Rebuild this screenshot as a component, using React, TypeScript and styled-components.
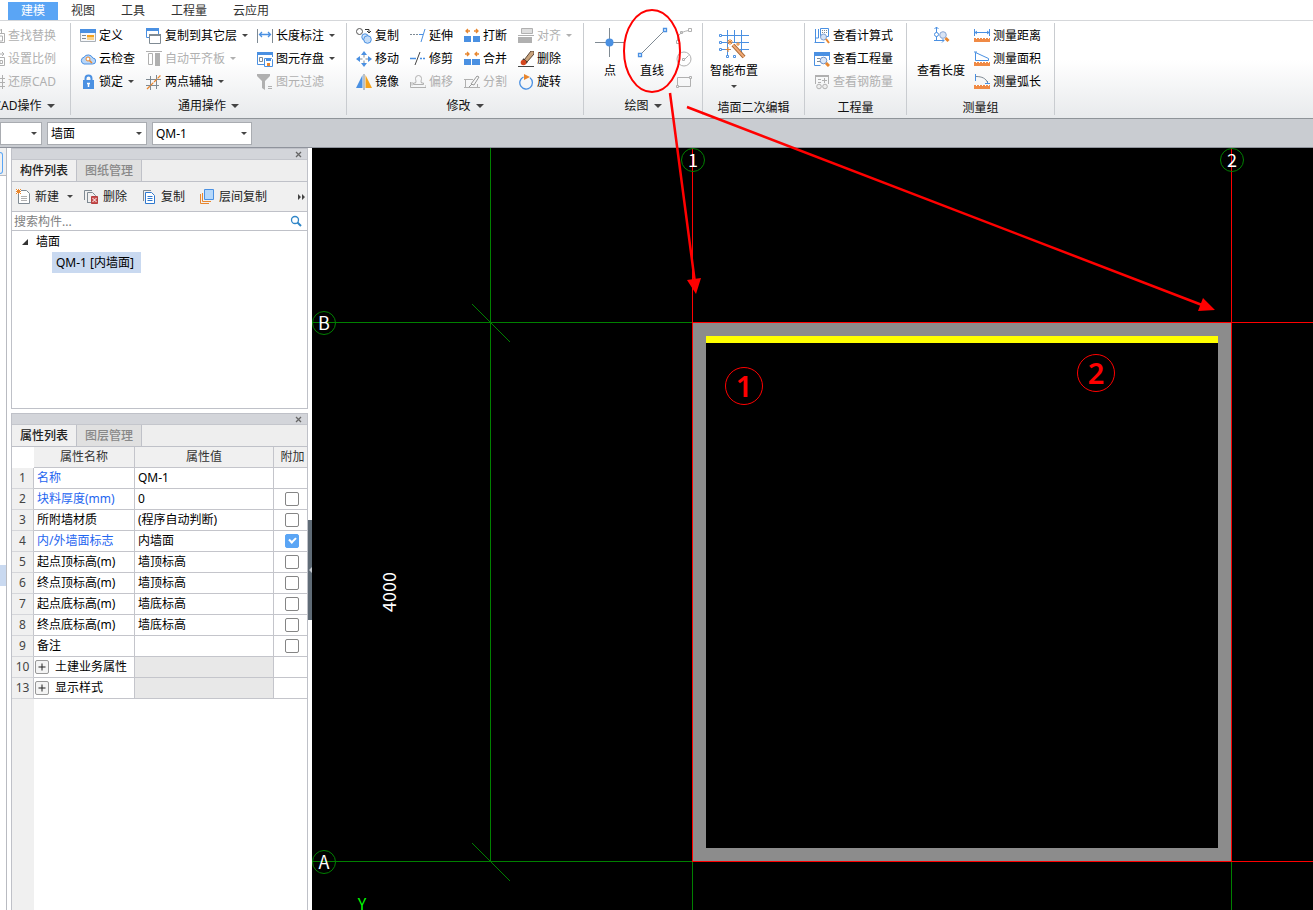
import React from "react";
import styled, { createGlobalStyle, css } from "styled-components";

const UI_FONT = '"Noto Sans", "Noto Sans CJK SC", sans-serif';

const GlobalStyle = createGlobalStyle`
  *, *::before, *::after { box-sizing: border-box; }
  html, body { margin: 0; padding: 0; }
  body { font: 12px/16px ${UI_FONT}; color: #1a1a1a; background: #fff; overflow: hidden; }
  button, input, select { font: inherit; color: inherit; margin: 0; }
  button { background: none; border: 0; padding: 0; cursor: pointer; }
`;

/* ---------- icons ---------- */

const B = "#4a90e2";
const G = "#7f8a93";
const O = "#e8862e";
const D = "#b0b0b0";

const icons: Record<string, React.ReactNode> = {
  find: <path d="M2 5.500h13.500v9H2zM5 2h8M12.500 1v4M10.500 8h3v5h-3z" fill="none" stroke={D} />,
  scale: <path d="M2 6.500h13.500v8H2zM9 3h6M13 1l2 2-2 2M11 9.500h2.500v3H11z" fill="none" stroke={D} />,
  restore: <path d="M13.500 1v14M11 4.500h5M11 8.500h5M11 12.500h5" fill="none" stroke={D} />,
  define: (
    <>
      <path d="M.5 4v9.500h15V4" fill="#f7f8fa" stroke="#a8afb6" />
      <path d="M0 1h16v4H0z" fill={B} />
      <path d="M2 7.500h4M2 10.500h4" stroke={G} />
      <path d="M7 7h7v2H7z" fill="#f5a21b" />
      <path d="M7 9h7v3H7z" fill="#fbd38a" />
    </>
  ),
  cloud: (
    <>
      <path d="M4 13h8.500a3 3 0 0 0 .3-6A5 5 0 0 0 4 6.200 3.500 3.500 0 0 0 4 13z" fill="#b9d6f7" stroke={B} />
      <circle cx="8" cy="8" r="2" fill="#fff" stroke={O} />
      <path d="M9.500 9.500L12 12" stroke={O} strokeWidth="1.500" />
    </>
  ),
  lock: (
    <>
      <path d="M5.500 7V4.500a3 3 0 0 1 6 0V7" fill="none" stroke={B} strokeWidth="2" />
      <path d="M3 6h11v9H3z" fill={B} />
      <path d="M8.500 9v4M7 9.500h3" stroke="#fff" strokeWidth="1.500" />
    </>
  ),
  copyLayer: (
    <>
      <path d="M.5 1.500h12v8H.5z" fill="#fff" stroke={B} />
      <path d="M0 0h13v3H0z" fill={B} />
      <path d="M3.500 6.500h11v9h-11z" fill="#fff" stroke={G} />
      <path d="M3 6h12v2H3z" fill={G} />
    </>
  ),
  align2: (
    <>
      <path d="M0 .5h16" stroke={D} />
      <path d="M2.500 2.500h4v11h-4z" fill="none" stroke={D} />
      <path d="M9 2h5v13H9z" fill={D} />
    </>
  ),
  axis: (
    <>
      <path d="M0 5.500h15M0 11.500h13M4.500 2v14M10.500 1v14" stroke={G} />
      <path d="M1 15L15 1" stroke={O} strokeWidth="1.300" strokeDasharray="4 1" />
    </>
  ),
  dim: (
    <>
      <path d="M.5 1v14M15.500 1v14" stroke={G} />
      <path d="M3 6.500h10M5 4L2.500 6.500 5 9M11 4l2.500 2.500L11 9" fill="none" stroke={B} strokeWidth="1.300" />
    </>
  ),
  save: (
    <>
      <path d="M.5 3v10.500h7M15.500 3v3" fill="none" stroke={B} />
      <path d="M0 1h16v3H0z" fill={B} />
      <path d="M2.500 6.500h3v4h-3z" fill="none" stroke={G} />
      <path d="M7.500 7.500h7l1 1v7h-8z" fill="#fff" stroke={B} />
      <path d="M9 8h5v2H9z" fill={B} />
      <path d="M10 12h3v3h-3z" fill={O} />
    </>
  ),
  filter: <path d="M0 0h13v2L8 7v9l-3-2V7L0 2zM11 12h4v1h-4zM11 14h4v1h-4z" fill={D} />,
  copy: (
    <>
      <circle cx="3.500" cy="3.500" r="3" fill="#fff" stroke="#555" />
      <path d="M9 1.500h4v3M11 3l2 2 2-2" fill="none" stroke="#333" />
      <circle cx="9" cy="9" r="3.200" fill="#d4e6fa" stroke={B} />
      <circle cx="11.500" cy="11.500" r="3.800" fill="#c4dcf7" stroke={B} />
    </>
  ),
  move: (
    <>
      <path d="M8 0l3 4H5zM8 16l3-4H5zM0 8l4-3v6zM16 8l-4-3v6z" fill={B} />
      <path d="M8 4v2.500M8 9.500V12M4 8h2.500M9.500 8H12" stroke={G} />
    </>
  ),
  mirror: (
    <>
      <path d="M6.500 1v13H0z" fill={B} />
      <path d="M8 0v16" stroke={G} />
      <path d="M9.500 1v13H16z" fill="#f5a21b" />
    </>
  ),
  extend: (
    <>
      <path d="M0 6.500h8" stroke={G} strokeDasharray="2 1" />
      <path d="M15 1l-4 13" stroke={B} />
      <path d="M9 6.500h4" stroke={B} />
    </>
  ),
  trim: (
    <>
      <path d="M0 7.500h6" stroke={B} strokeWidth="1.500" />
      <path d="M10 7.500h6" stroke={B} strokeWidth="1.500" strokeDasharray="2 1" />
      <path d="M10 1L5 14" stroke="#444" />
    </>
  ),
  offset: (
    <>
      <path d="M3.500 10.500h10V9h-2c-1-2 0-2.500 0-4.500a3 3 0 0 0-6 0c0 2 1 2.500 0 4.500h-2z" fill="none" stroke={D} />
      <path d="M.5 8v5.500H16V11M2 8v3.500" fill="none" stroke={D} />
    </>
  ),
  breakUp: (
    <>
      <path d="M0 8h7v6H0zM9 8h7v6H9z" fill={B} />
      <path d="M6 3H2M4 1L2 3l2 2M10 3h4M12 1l2 2-2 2" fill="none" stroke={O} strokeWidth="1.300" />
    </>
  ),
  merge: (
    <>
      <path d="M0 8h7v6H0zM8 8h8v6H8z" fill={B} />
      <path d="M1 3h4M3 1l2 2-2 2M15 3h-4M13 1l-2 2 2 2" fill="none" stroke={O} strokeWidth="1.300" />
    </>
  ),
  split: (
    <>
      <path d="M1.500 5v8.500h12V10M0 5.500h9M0 13.500h16" fill="none" stroke={D} />
      <path d="M7 10l6-8 2 1-5 8zM5 13l3-3" fill="none" stroke="#999" />
    </>
  ),
  alignTo: (
    <>
      <path d="M3.500.5h11v5h-11z" fill="#ddd" stroke={D} />
      <path d="M0 7.500h16" stroke={D} />
      <path d="M0 9h14v6H0z" fill={D} />
    </>
  ),
  erase: (
    <>
      <path d="M6.500 8.500L13 0h3v3l-7 8z" fill="#c9a37c" stroke="#5c4634" />
      <path d="M5 8l4 4" stroke="#333" strokeWidth="2" />
      <circle cx="5.500" cy="11.500" r="2.800" fill="#d3461f" />
      <path d="M0 15.500h16" stroke="#444" />
    </>
  ),
  rotate: (
    <>
      <path d="M5.500 3A6.300 6.300 0 1 0 12 3.800" fill="none" stroke={B} strokeWidth="1.300" />
      <path d="M6 0l6 3-6 3z" fill={O} />
    </>
  ),
  arc: <path d="M1.500 12c0-5 3-8 11-9.500M.5 12.500h3v3h-3zM12.500.5h3v3h-3zM4.500 3.500h2v2h-2z" fill="none" stroke={D} />,
  circle: (
    <>
      <circle cx="8" cy="8" r="7" fill="none" stroke={D} />
      <path d="M8.500 8.500l4-4M6.500 7.500h2v2h-2z" fill="none" stroke={D} />
    </>
  ),
  rect: (
    <>
      <path d="M1.500 3.500h13v9h-13z" fill="none" stroke={D} />
      <path d="M.5 11.500h2v2h-2zM13.500 2.500h2v2h-2z" fill="#f5f6f6" stroke={D} />
    </>
  ),
  formula: (
    <>
      <path d="M1.500 1v13.500H8M4.500 1v9H1.500M.5 14.500h10" fill="none" stroke={B} />
      <path d="M6.500.5h8v8h-8z" fill="#fff" stroke={B} />
      <path d="M8 2.500h5M8 4.500h5" stroke={G} strokeDasharray="1 1" />
      <circle cx="9.500" cy="9" r="3" fill="#d4e2f5" stroke="#7c9dd0" />
      <path d="M12 11l3 4" stroke={O} strokeWidth="2" />
    </>
  ),
  quantity: (
    <>
      <path d="M.5 3v11.500h6M15.500 3v6" fill="none" stroke={B} />
      <path d="M0 1h16v4H0z" fill={B} />
      <path d="M3 7.500h3M3 10.500h3" stroke={G} />
      <circle cx="9.500" cy="9.500" r="3.300" fill="#dce8f8" stroke="#6f92c8" />
      <path d="M12 12l3 3" stroke={O} strokeWidth="3" />
    </>
  ),
  rebar: (
    <>
      <path d="M1.500 10V2.500h13V10M4 5.500h3M4 8.500h3M10.500 4v5M8 6.500h5" fill="none" stroke={D} />
      <path d="M1 1h14v2H1z" fill={D} />
      <circle cx="5" cy="12.500" r="2.300" fill="#eee" stroke={D} />
      <circle cx="11" cy="12.500" r="2.300" fill="#eee" stroke={D} />
    </>
  ),
  viewLen: (
    <>
      <path d="M3.500 0v14M1.500 2l2-2 2 2M1 13.500h10M9 11.500l2 2-2 2" fill="none" stroke={B} />
      <circle cx="3.500" cy="7.500" r="2" fill="#fff" stroke={B} />
      <circle cx="10" cy="8" r="3.300" fill="#d9e4f5" stroke="#8aa6d3" />
      <path d="M12.500 11l3 3" stroke={O} strokeWidth="3" />
    </>
  ),
  dist: (
    <>
      <path d="M.5 1v7M15.500 1v7M1 4.500h14M3 3L1 4.500 3 6M13 3l2 1.500L13 6" fill="none" stroke={B} />
      <path d="M0 10h16v4H0z" fill="#f08a45" />
      <path d="M2 10.500h13" stroke="#fff" strokeDasharray="1 2" />
    </>
  ),
  area: (
    <>
      <path d="M1.500 1.500l13 6v2h-13zM0 1h3" fill="none" stroke={B} />
      <path d="M0 11h16v4H0z" fill="#f08a45" />
      <path d="M2 11.500h13" stroke="#fff" strokeDasharray="1 2" />
    </>
  ),
  arcLen: (
    <>
      <path d="M1.500 0v7M11 9.500h5M13.500 7v3" fill="none" stroke={B} />
      <path d="M2 2.500c6 0 10 2 11.500 6" fill="none" stroke={G} />
      <path d="M0 11h16v4H0z" fill="#f08a45" />
      <path d="M2 11.500h13" stroke="#fff" strokeDasharray="1 2" />
    </>
  ),
  newDoc: (
    <>
      <path d="M2.500 1.500h8l3 3v10h-11z" fill="#fff" stroke={G} />
      <path d="M5 7.500h6M5 9.500h6M5 11.500h6" stroke={D} />
      <path d="M0 0h5v5H0z" fill="#fff" />
      <path d="M0 0l5 5M5 0L0 5M2.500 0v5M0 2.500h5" stroke={O} />
    </>
  ),
  delDoc: (
    <>
      <path d="M.5 11V1.500H8M3.500 14V3.500h5l3 3V7M3.500 13.500H7" fill="none" stroke={G} />
      <path d="M7.500 7.500h6v7h-6z" fill="#c94f4f" stroke="#b54040" />
      <path d="M8.500 9l4 4M12.500 9l-4 4" stroke="#fff" />
    </>
  ),
  copyDoc: (
    <>
      <path d="M1.500 12V1.500H9" fill="none" stroke={G} />
      <path d="M3.500 3.500h6l3 3v8h-9z" fill="#fff" stroke="#2f79cf" />
      <path d="M5.500 7.500h5M5.500 9.500h5M5.500 11.500h5" stroke="#2f79cf" />
    </>
  ),
  layerCopy: (
    <>
      <path d="M.5 5v9.500H9" fill="none" stroke={O} />
      <path d="M2.500 4v8.500H11" fill="none" stroke={O} />
      <path d="M4.500.5h9v10h-9z" fill="#b5d8fb" stroke={B} />
    </>
  ),
};

const Glyph = styled.svg`
  flex: none;
  width: 16px;
  height: 16px;
`;

const Icon = ({ name }: { name: string }) => (
  <Glyph viewBox="0 0 16 16" aria-hidden="true">{icons[name]}</Glyph>
);

const CaretSvg = styled.svg<{ $muted?: boolean }>`
  flex: none;
  width: 6px;
  height: 3px;
  fill: ${(p) => (p.$muted ? "#b0b0b0" : "#444")};
`;

const Caret = ({ muted }: { muted?: boolean }) => (
  <CaretSvg viewBox="0 0 6 3" $muted={muted} aria-hidden="true"><path d="M0 0h6L3 3z" /></CaretSvg>
);

/* ---------- ribbon ---------- */

const Page = styled.div`
  position: relative;
  display: flex;
  flex-direction: column;
  height: 100vh;
  min-height: 500px;
`;

const MenuBar = styled.nav`
  flex: none;
  display: flex;
  height: 21px;
  padding: 2px 8px 0;
  border-bottom: 1px solid #d5d7da;
`;

const MenuTab = styled.button<{ $active?: boolean }>`
  padding: 0 13px;
  line-height: 18px;
  color: ${(p) => (p.$active ? "#fff" : "#333")};
  background: ${(p) => (p.$active ? "#5aa5f5" : "transparent")};
`;

const Ribbon = styled.div`
  flex: none;
  display: flex;
  height: 98px;
  padding: 2px 0 3px;
  overflow: hidden;
  background: linear-gradient(#fff 40%, #e8eaec);
  border-bottom: 1px solid #8f9499;
`;

const Group = styled.section<{ $width: number; $cut?: boolean }>`
  flex: none;
  display: flex;
  flex-direction: column;
  width: ${(p) => p.$width}px;
  margin-left: ${(p) => (p.$cut ? -22 : 0)}px;
  border-right: 1px solid #c9ccd0;
`;

const GroupBody = styled.div<{ $cols?: string; $pad?: number }>`
  flex: none;
  display: grid;
  grid-template-columns: ${(p) => p.$cols ?? "auto"};
  grid-template-rows: repeat(3, 23px);
  grid-auto-flow: column;
  justify-content: start;
  height: 72px;
  padding: 1px 0 0 ${(p) => p.$pad ?? 9}px;
`;

const GroupTitle = styled.div<{ $low?: boolean }>`
  flex: none;
  display: flex;
  align-items: center;
  justify-content: center;
  gap: 5px;
  height: 16px;
  margin-top: ${(p) => (p.$low ? 5 : 3)}px;
  white-space: nowrap;
  color: #111;
  ${CaretSvg} { width: 8px; height: 4px; }
`;

const ToolButton = styled.button`
  display: flex;
  align-items: center;
  gap: 3px;
  white-space: nowrap;
  text-align: left;
  color: #000;
  &:disabled { color: #b0b0b0; }
  ${CaretSvg} { margin-left: 2px; }
`;

const BigButton = styled.button`
  grid-row: 1 / span 3;
  display: flex;
  flex-direction: column;
  align-items: center;
  white-space: nowrap;
  color: #000;
  ${CaretSvg} { margin-top: 6px; }
`;

const BigArt = styled.svg`
  width: 32px;
  height: 32px;
  margin: 3px 0 4px;
`;

type ToolDef = { icon: string; label: string; off?: boolean; menu?: boolean };

const Tool = ({ icon, label, off, menu }: ToolDef) => (
  <ToolButton disabled={off}>
    <Icon name={icon} />
    {label}
    {menu && <Caret muted={off} />}
  </ToolButton>
);

const IconTool = ({ icon, label }: ToolDef) => (
  <ToolButton aria-label={label}><Icon name={icon} /></ToolButton>
);

const cadTools: ToolDef[] = [
  { icon: "find", label: "查找替换", off: true },
  { icon: "scale", label: "设置比例", off: true },
  { icon: "restore", label: "还原CAD", off: true },
];

const commonTools: ToolDef[] = [
  { icon: "define", label: "定义" },
  { icon: "cloud", label: "云检查" },
  { icon: "lock", label: "锁定", menu: true },
  { icon: "copyLayer", label: "复制到其它层", menu: true },
  { icon: "align2", label: "自动平齐板", off: true, menu: true },
  { icon: "axis", label: "两点辅轴", menu: true },
  { icon: "dim", label: "长度标注", menu: true },
  { icon: "save", label: "图元存盘", menu: true },
  { icon: "filter", label: "图元过滤", off: true },
];

const editTools: ToolDef[] = [
  { icon: "copy", label: "复制" },
  { icon: "move", label: "移动" },
  { icon: "mirror", label: "镜像" },
  { icon: "extend", label: "延伸" },
  { icon: "trim", label: "修剪" },
  { icon: "offset", label: "偏移", off: true },
  { icon: "breakUp", label: "打断" },
  { icon: "merge", label: "合并" },
  { icon: "split", label: "分割", off: true },
  { icon: "alignTo", label: "对齐", off: true, menu: true },
  { icon: "erase", label: "删除" },
  { icon: "rotate", label: "旋转" },
];

const quantityTools: ToolDef[] = [
  { icon: "formula", label: "查看计算式" },
  { icon: "quantity", label: "查看工程量" },
  { icon: "rebar", label: "查看钢筋量", off: true },
];

const measureTools: ToolDef[] = [
  { icon: "dist", label: "测量距离" },
  { icon: "area", label: "测量面积" },
  { icon: "arcLen", label: "测量弧长" },
];

const tools = (list: ToolDef[]) => list.map((t) => <Tool key={t.label} {...t} />);

const RibbonBar = () => (
  <Ribbon>
    <Group $width={93} $cut>
      <GroupBody $pad={11}>{tools(cadTools)}</GroupBody>
      <GroupTitle>CAD操作<Caret /></GroupTitle>
    </Group>
    <Group $width={276}>
      <GroupBody $cols="66px 111px auto">{tools(commonTools)}</GroupBody>
      <GroupTitle>通用操作<Caret /></GroupTitle>
    </Group>
    <Group $width={237}>
      <GroupBody $cols="54px 54px 54px auto">{tools(editTools)}</GroupBody>
      <GroupTitle>修改<Caret /></GroupTitle>
    </Group>
    <Group $width={119}>
      <GroupBody $cols="36px 48px 16px" $pad={8}>
        <BigButton>
          <BigArt viewBox="0 0 32 32">
            <path d="M15.500 1v29M1 15.500h29" stroke={G} />
            <circle cx="15.500" cy="15.500" r="4" fill={B} />
          </BigArt>
          点
        </BigButton>
        <BigButton>
          <BigArt viewBox="0 0 32 32">
            <path d="M5 27L27 5" stroke={G} />
            <path d="M2.500 26.500h3v3h-3zM27.500 1.500h3v3h-3z" fill="#fff" stroke={B} strokeWidth="1.300" />
          </BigArt>
          直线
        </BigButton>
        <IconTool icon="arc" label="弧线" />
        <IconTool icon="circle" label="圆" />
        <IconTool icon="rect" label="矩形" />
      </GroupBody>
      <GroupTitle>绘图<Caret /></GroupTitle>
    </Group>
    <Group $width={102}>
      <GroupBody $pad={7}>
        <BigButton>
          <BigArt viewBox="0 0 32 32">
            <path d="M9.500 3v25M16.500 3v12M23.500 3v22M3 8.500h28M3 15.500h28M3 22.500h10M22 22.500h9" stroke={B} fill="none" />
            <path d="M1.500 7.500h2v2h-2zM1.500 14.500h2v2h-2zM1.500 21.500h2v2h-2zM8.500 28.500h2v2h-2zM15.500 28.500h2v2h-2z" fill="#fff" stroke={B} />
            <path d="M15 18l11 12" stroke="#a5642f" strokeWidth="4" />
            <path d="M15 18l11 12" stroke="#f0a875" strokeWidth="2" />
            <path d="M12 12v6M9 15h6M10 13l4 4M14 13l-4 4M10 20v5M7.500 22.500h5M20 15v4M18 17h4" stroke={O} />
          </BigArt>
          智能布置
          <Caret />
        </BigButton>
      </GroupBody>
      <GroupTitle $low>墙面二次编辑</GroupTitle>
    </Group>
    <Group $width={102}>
      <GroupBody>{tools(quantityTools)}</GroupBody>
      <GroupTitle $low>工程量</GroupTitle>
    </Group>
    <Group $width={148}>
      <GroupBody $cols="48px auto" $pad={10}>
        <BigButton>
          <BigArt viewBox="0 0 32 32"><g transform="translate(8 0)">{icons.viewLen}</g></BigArt>
          查看长度
        </BigButton>
        {measureTools.map((t) => <MeasureCell key={t.label}><Tool {...t} /></MeasureCell>)}
      </GroupBody>
      <GroupTitle $low>测量组</GroupTitle>
    </Group>
  </Ribbon>
);

const MeasureCell = styled.div`
  display: flex;
  padding-left: 9px;
`;

/* ---------- selector bar ---------- */

const SelectorBar = styled.div`
  flex: none;
  display: flex;
  align-items: center;
  gap: 5px;
  height: 29px;
  background: #c9ccd1;
  border-bottom: 1px solid #8f939c;
`;

const Combo = styled.label<{ $width: number }>`
  display: grid;
  grid-template-columns: 1fr 14px;
  align-items: center;
  width: ${(p) => p.$width}px;
  height: 23px;
  background: #fff;
  border: 1px solid #a9acb1;
  select {
    grid-area: 1 / 1 / 2 / 3;
    appearance: none;
    height: 21px;
    padding: 1px 14px 0 3px;
    border: 0;
    background: transparent;
    color: #000;
  }
  ${CaretSvg} { grid-area: 1 / 2; margin-left: 4px; pointer-events: none; }
`;

const ComboBox = ({ label, value, width }: { label: string; value: string; width: number }) => (
  <Combo $width={width}>
    <select aria-label={label}><option>{value}</option></select>
    <Caret />
  </Combo>
);

/* ---------- side panels ---------- */

const Workspace = styled.main`
  flex: 1;
  display: flex;
  min-height: 0;
`;

const Rail = styled.div`
  flex: none;
  width: 7px;
  border-right: 1px solid #b9bbc1;
`;

const RailButton = styled.div`
  height: 28px;
  padding-top: 4px;
  border-bottom: 1px solid #b9bbc1;
  background: #f0f0f0;
  &::before {
    content: "";
    display: block;
    width: 3px;
    height: 22px;
    border: 1px solid #5aa5f5;
    border-left: 0;
    border-radius: 0 3px 3px 0;
  }
`;

const RailMark = styled.div`
  height: 21px;
  margin-top: 389px;
  background: #c9d9f0;
`;

const Side = styled.aside`
  flex: none;
  display: flex;
  flex-direction: column;
  gap: 4px;
  width: 297px;
  margin-left: 4px;
`;

const Panel = styled.section<{ $fill?: boolean }>`
  display: flex;
  flex-direction: column;
  border: 1px solid #bfc1c8;
  ${(p) => (p.$fill ? css`flex: 1; min-height: 0; border-bottom: 0; overflow: hidden;` : css`flex: none; height: 261px;`)}
`;

const PanelBar = styled.div`
  flex: none;
  display: flex;
  justify-content: flex-end;
  align-items: center;
  height: 11px;
  padding-right: 5px;
  background: #d3d5da;
  border-bottom: 1px solid #c4c6cc;
  button { display: flex; }
  svg { width: 7px; height: 7px; }
`;

const PanelTabs = styled.div`
  flex: none;
  display: flex;
  height: 22px;
  background: #eee;
  border-bottom: 1px solid #bfc1c8;
`;

const PanelTab = styled.button<{ $active?: boolean }>`
  padding: 0 8px;
  line-height: 21px;
  border-right: 1px solid #bfc1c8;
  color: ${(p) => (p.$active ? "#222" : "#888")};
  font-weight: 500;
  background: ${(p) => (p.$active ? "#f0f0f0" : "#e0e0e0")};
`;

const Toolbar = styled.div`
  flex: none;
  display: flex;
  align-items: center;
  gap: 15px;
  height: 30px;
  padding: 0 1px 0 4px;
  background: #f0f0f0;
  border-bottom: 1px solid #bfc1c8;
`;

const ToolbarButton = styled.button`
  display: flex;
  align-items: center;
  gap: 3px;
  white-space: nowrap;
  color: #222;
  &:last-child { margin-left: auto; }
  ${CaretSvg} { margin: 0 -4px 0 5px; }
`;

const SearchRow = styled.label`
  flex: none;
  display: flex;
  align-items: center;
  height: 19px;
  padding: 0 5px 0 2px;
  border-bottom: 1px solid #bfc1c8;
  input {
    flex: 1;
    min-width: 0;
    padding: 2px 0 0;
    border: 0;
    outline: 0;
    background: none;
  }
  input::placeholder { color: #808080; }
  svg { width: 12px; height: 12px; }
`;

const Tree = styled.ul`
  list-style: none;
  margin: 0;
  padding: 0 0 0 10px;
  ul { list-style: none; margin: 0; padding: 0 0 0 30px; }
`;

const TreeLabel = styled.div`
  display: flex;
  align-items: center;
  gap: 8px;
  height: 21px;
  color: #000;
  svg { width: 6px; height: 6px; }
`;

const TreeLeaf = styled.span`
  display: block;
  width: fit-content;
  padding: 0 7px 0 4px;
  line-height: 21px;
  color: #000;
  background: #c9d9f0;
`;

const TableArea = styled.div`
  flex: 1;
  min-height: 0;
  background: linear-gradient(to right, #f0f0f0 22px, #fff 22px);
`;

const PropTable = styled.table`
  width: 100%;
  table-layout: fixed;
  border-collapse: separate;
  border-spacing: 0;
  background: #fff;
  th, td {
    height: 21px;
    padding: 0 0 0 3px;
    border-right: 1px solid #c4c5cb;
    border-bottom: 1px solid #c4c5cb;
    line-height: 18px;
    white-space: nowrap;
    overflow: hidden;
    text-align: left;
    font-weight: 400;
  }
  th:last-child, td:last-child { border-right: 0; }
  thead th { height: 20px; padding: 0; text-align: center; color: #333; background: #f0f0f0; }
  thead th:last-child { padding-left: 4px; }
  thead td { padding: 0; border-color: #fff; }
  tbody th { padding: 0; text-align: center; color: #444; background: #f0f0f0; border-bottom-color: #d5d6da; }
`;

const NameCell = styled.td<{ $link?: boolean }>`
  color: ${(p) => (p.$link ? "#1f66f0" : "#000")};
`;

const ValueCell = styled.td<{ $grey?: boolean }>`
  color: #000;
  background: ${(p) => (p.$grey ? "#e8e8e8" : "#fff")};
`;

const Check = styled.input`
  appearance: none;
  display: block;
  position: relative;
  width: 14px;
  height: 14px;
  && { margin: 0 auto; }
  border: 1px solid #858585;
  border-radius: 2px;
  background: #fff;
  &:checked { background: #5aa5f5; border-color: #5aa5f5; }
  &:checked::after {
    content: "";
    position: absolute;
    left: 3px;
    top: 2px;
    width: 7px;
    height: 5px;
    border: solid #fff;
    border-width: 0 0 2px 2px;
    transform: rotate(-45deg);
  }
`;

const Expander = styled.button`
  display: flex;
  align-items: center;
  gap: 6px;
  margin-left: -2px;
  svg { width: 14px; height: 14px; }
`;

const Splitter = styled.div`
  flex: none;
  display: flex;
  flex-direction: column;
  width: 4px;
  padding-top: 372px;
`;

const SplitterGrip = styled.button`
  display: flex;
  align-items: center;
  width: 4px;
  height: 100px;
  background: #5f6b76;
`;

type Prop = { no: number; name: string; value?: string; link?: boolean; check?: boolean; on?: boolean; group?: boolean };

const props: Prop[] = [
  { no: 1, name: "名称", value: "QM-1", link: true },
  { no: 2, name: "块料厚度(mm)", value: "0", link: true, check: true },
  { no: 3, name: "所附墙材质", value: "(程序自动判断)", check: true },
  { no: 4, name: "内/外墙面标志", value: "内墙面", link: true, check: true, on: true },
  { no: 5, name: "起点顶标高(m)", value: "墙顶标高", check: true },
  { no: 6, name: "终点顶标高(m)", value: "墙顶标高", check: true },
  { no: 7, name: "起点底标高(m)", value: "墙底标高", check: true },
  { no: 8, name: "终点底标高(m)", value: "墙底标高", check: true },
  { no: 9, name: "备注", check: true },
  { no: 10, name: "土建业务属性", group: true },
  { no: 13, name: "显示样式", group: true },
];

const PanelHead = ({ tabs }: { tabs: string[] }) => (
  <>
    <PanelBar>
      <button aria-label="关闭">
        <svg viewBox="0 0 7 7"><path d="M1 1l5 5M6 1L1 6" stroke="#666" strokeWidth="1.300" /></svg>
      </button>
    </PanelBar>
    <PanelTabs>
      {tabs.map((t, i) => <PanelTab key={t} $active={i === 0}>{t}</PanelTab>)}
    </PanelTabs>
  </>
);

const ComponentPanel = () => (
  <Panel>
    <PanelHead tabs={["构件列表", "图纸管理"]} />
    <Toolbar>
      <ToolbarButton><Icon name="newDoc" />新建<Caret /></ToolbarButton>
      <ToolbarButton><Icon name="delDoc" />删除</ToolbarButton>
      <ToolbarButton><Icon name="copyDoc" />复制</ToolbarButton>
      <ToolbarButton><Icon name="layerCopy" />层间复制</ToolbarButton>
      <ToolbarButton aria-label="更多">
        <svg width="8" height="6" viewBox="0 0 8 6"><path d="M0 0l3 3-3 3zM4 0l3 3-3 3z" fill="#444" /></svg>
      </ToolbarButton>
    </Toolbar>
    <SearchRow>
      <input aria-label="搜索构件" placeholder="搜索构件..." />
      <svg viewBox="0 0 12 12"><circle cx="5" cy="5" r="3.500" fill="none" stroke="#2f86c8" strokeWidth="1.300" /><path d="M7.500 7.500L11 11" stroke="#2f86c8" strokeWidth="2" /></svg>
    </SearchRow>
    <Tree>
      <li>
        <TreeLabel><svg viewBox="0 0 6 6"><path d="M6 0v6H0z" fill="#333" /></svg>墙面</TreeLabel>
        <ul><li><TreeLeaf>QM-1 [内墙面]</TreeLeaf></li></ul>
      </li>
    </Tree>
  </Panel>
);

const PropertyPanel = () => (
  <Panel $fill>
    <PanelHead tabs={["属性列表", "图层管理"]} />
    <TableArea>
      <PropTable>
        <colgroup>
          <col style={{ width: 22 }} />
          <col style={{ width: 101 }} />
          <col style={{ width: 139 }} />
          <col />
        </colgroup>
        <thead>
          <tr><td /><th>属性名称</th><th>属性值</th><th>附加</th></tr>
        </thead>
        <tbody>
          {props.map((p) => (
            <tr key={p.no}>
              <th scope="row">{p.no}</th>
              <NameCell $link={p.link}>
                {p.group ? (
                  <Expander aria-expanded="false">
                    <svg viewBox="0 0 14 14">
                      <rect x=".5" y=".5" width="13" height="13" rx="1.500" fill="#f4f4f4" stroke="#999" />
                      <path d="M3.500 7h7M7 3.500v7" stroke="#222" />
                    </svg>
                    {p.name}
                  </Expander>
                ) : p.name}
              </NameCell>
              <ValueCell $grey={p.group}>{p.value}</ValueCell>
              <td>
                {p.check && <Check type="checkbox" defaultChecked={p.on} aria-label={p.name} />}
              </td>
            </tr>
          ))}
        </tbody>
      </PropTable>
    </TableArea>
  </Panel>
);

/* ---------- drawing ---------- */

const Canvas = styled.div`
  flex: 1;
  min-width: 0;
  overflow: hidden;
  background: #000;
  svg { display: block; width: 100%; height: 100%; }
  text { font-family: "Noto Sans CJK SC", sans-serif; font-size: 18px; fill: #fff; text-anchor: middle; }
  .step { font-family: "Noto Sans", sans-serif; font-size: 29px; font-weight: 600; fill: #f00; }
  .ucs { font-size: 16px; fill: #0f0; }
`;

const axisBubbles = [
  { id: "1", x: 381, y: 12 },
  { id: "2", x: 920, y: 12 },
  { id: "B", x: 12, y: 175 },
  { id: "A", x: 12, y: 714 },
];

const steps = [
  { id: "1", x: 432, y: 238 },
  { id: "2", x: 784, y: 225 },
];

const Drawing = () => (
  <Canvas>
    <svg role="img" aria-label="墙面平面图">
      <g shapeRendering="crispEdges">
        <rect x="381" y="175" width="538" height="538" fill="#8c8c8c" />
        <rect x="394" y="188" width="512" height="512" fill="#000" />
        <rect x="394" y="188" width="512" height="7" fill="#ff0" />
        <g stroke="#008000">
          <line x1="178.500" y1="0" x2="178.500" y2="713" />
          <line x1="0" y1="174.500" x2="380" y2="174.500" />
          <line x1="0" y1="713.500" x2="380" y2="713.500" />
          <line x1="380.500" y1="714" x2="380.500" y2="100%" />
          <line x1="919.500" y1="714" x2="919.500" y2="100%" />
          <line x1="160" y1="156" x2="198" y2="194" />
          <line x1="160" y1="695" x2="198" y2="733" />
        </g>
        <g stroke="#f00">
          <line x1="380.500" y1="0" x2="380.500" y2="714" />
          <line x1="919.500" y1="0" x2="919.500" y2="714" />
          <line x1="380" y1="174.500" x2="100%" y2="174.500" />
          <line x1="380" y1="713.500" x2="100%" y2="713.500" />
        </g>
      </g>
      {axisBubbles.map((b) => (
        <g key={b.id}>
          <circle cx={b.x} cy={b.y} r="11.500" fill="none" stroke="#008000" />
          <text x={b.x} y={b.y + 7}>{b.id}</text>
        </g>
      ))}
      <text transform="translate(84 444) rotate(-90)">4000</text>
      <text className="ucs" x="50" y="762">Y</text>
      {steps.map((s) => (
        <g key={s.id}>
          <circle cx={s.x} cy={s.y} r="18.500" fill="none" stroke="#f00" />
          <text className="step" x={s.x} y={s.y + 11}>{s.id}</text>
        </g>
      ))}
    </svg>
  </Canvas>
);

/* hand-drawn guide marks that run from the ribbon over to the drawing */
const GuideMarks = styled.svg`
  position: absolute;
  left: 0;
  top: 0;
  width: 1230px;
  height: 320px;
  pointer-events: none;
`;

export default function App() {
  return (
    <Page>
      <GlobalStyle />
      <MenuBar>
        {["建模", "视图", "工具", "工程量", "云应用"].map((t, i) => (
          <MenuTab key={t} $active={i === 0}>{t}</MenuTab>
        ))}
      </MenuBar>
      <RibbonBar />
      <SelectorBar>
        <ComboBox label="楼层" value="" width={42} />
        <ComboBox label="构件类型" value="墙面" width={100} />
        <ComboBox label="构件" value="QM-1" width={100} />
      </SelectorBar>
      <Workspace>
        <Rail>
          <RailButton />
          <RailMark />
        </Rail>
        <Side>
          <ComponentPanel />
          <PropertyPanel />
        </Side>
        <Splitter>
          <SplitterGrip aria-label="收起面板">
            <svg width="4" height="6" viewBox="0 0 4 6"><path d="M4 0v6L1 3z" fill="#c5cad0" /></svg>
          </SplitterGrip>
        </Splitter>
        <Drawing />
      </Workspace>
      <GuideMarks viewBox="0 0 1230 320" aria-hidden="true">
        <ellipse cx="652" cy="51" rx="28" ry="41" fill="none" stroke="#f00" strokeWidth="2" />
        <path d="M670 93l25 190M687 107l515 198" fill="none" stroke="#f00" strokeWidth="2.500" />
        <path d="M687 280l14-2-5 16zM1203 298l-5 13 17-1z" fill="#f00" />
      </GuideMarks>
    </Page>
  );
}
